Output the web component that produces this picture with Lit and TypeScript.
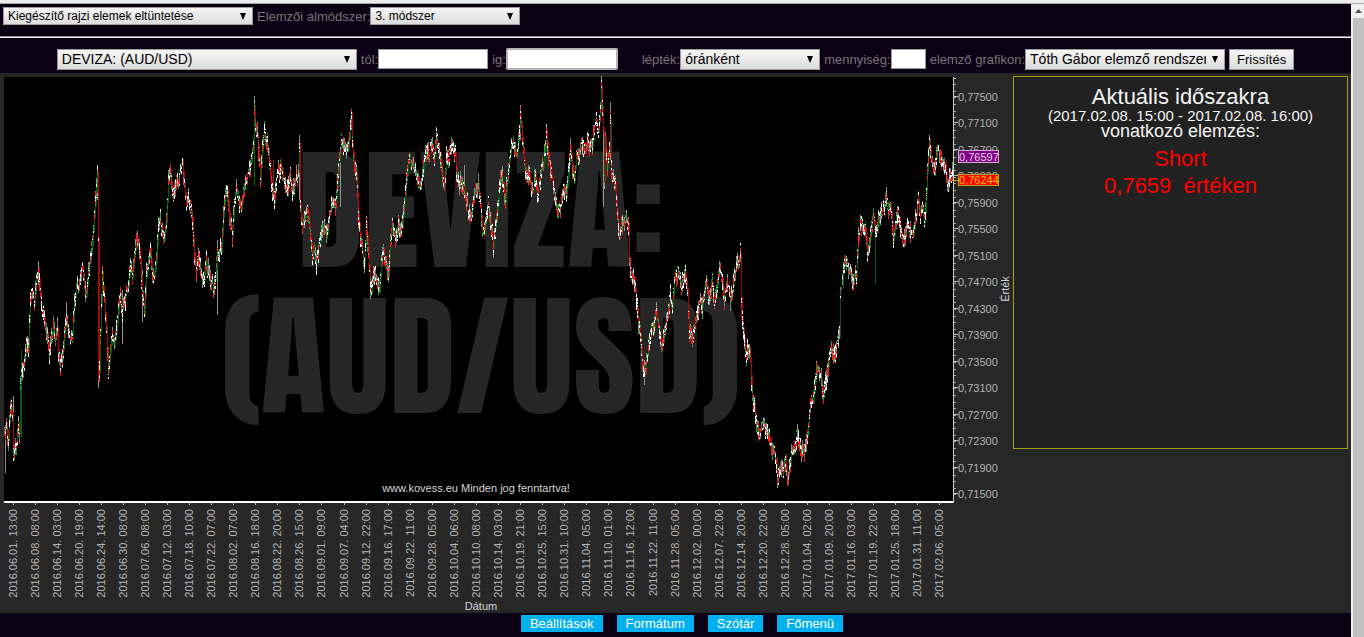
import { LitElement, html, svg, css } from "lit";
import { customElement } from "lit/decorators.js";

const DATES = `2016.06.01. 13:00|2016.06.08. 08:00|2016.06.14. 03:00|2016.06.20. 19:00|2016.06.24. 14:00|2016.06.30. 08:00|2016.07.06. 08:00|2016.07.12. 03:00|2016.07.18. 10:00|2016.07.22. 07:00|2016.08.02. 07:00|2016.08.16. 18:00|2016.08.22. 20:00|2016.08.26. 15:00|2016.09.01. 09:00|2016.09.07. 04:00|2016.09.12. 22:00|2016.09.16. 17:00|2016.09.22. 11:00|2016.09.28. 05:00|2016.10.04. 06:00|2016.10.10. 08:00|2016.10.14. 03:00|2016.10.19. 21:00|2016.10.25. 15:00|2016.10.31. 10:00|2016.11.04. 05:00|2016.11.10. 01:00|2016.11.16. 12:00|2016.11.22. 11:00|2016.11.28. 05:00|2016.12.02. 00:00|2016.12.07. 22:00|2016.12.14. 20:00|2016.12.20. 22:00|2016.12.28. 05:00|2017.01.04. 02:00|2017.01.09. 20:00|2017.01.16. 03:00|2017.01.19. 22:00|2017.01.25. 18:00|2017.01.31. 11:00|2017.02.06. 05:00`.split("|");

// Course of the rate: "x y" pairs in chart units.
const COURSE = `4 432,6 425,8 440,10 402,12 415,13 448,16 443,18 425,19 432,20 385,22 375,24 360,26 346,28 350,29 320,30 300,32 292,34 302,36 280,38 270,39 282,41 304,43 312,45 325,47 335,49 350,51 340,53 326,55 335,57 330,58 352,60 365,62 358,64 335,66 320,68 330,70 340,72 335,74 305,76 285,78 290,80 280,82 268,84 283,86 294,88 272,90 260,92 243,94 215,96 190,97 174,98 240,99 370,100 330,102 275,104 300,106 330,108 370,110 350,112 335,114 345,116 330,118 312,120 295,122 310,124 300,126 295,128 285,130 265,132 275,134 255,136 240,138 240,140 260,142 295,144 312,146 275,148 260,150 250,152 275,154 275,156 260,158 225,160 220,162 230,164 238,166 220,168 180,170 172,172 195,174 190,176 185,178 180,180 172,182 162,184 185,186 205,188 198,190 205,192 220,194 255,196 270,198 260,200 270,202 280,204 278,206 262,208 268,210 278,213 285,215 278,217 255,219 255,221 250,223 215,225 195,227 192,229 215,232 235,234 200,236 190,238 200,241 207,243 192,246 185,248 175,251 160,253 140,254 108,255 125,257 135,259 160,260 180,262 150,264 128,266 140,268 150,270 175,272 190,274 200,276 180,278 170,280 168,282 170,284 185,286 190,288 185,290 178,292 190,294 185,296 178,298 170,299 145,300 205,302 228,304 222,306 212,308 215,310 235,312 255,314 250,316 260,318 248,320 240,322 230,324 228,327 232,329 215,332 200,335 207,337 185,339 160,341 142,343 147,345 142,348 148,350 125,351 115,352 145,354 165,356 175,358 215,360 235,362 250,364 262,366 225,368 250,370 285,371 290,373 275,375 275,377 280,379 290,381 260,383 250,385 260,388 275,390 240,392 225,394 235,396 235,398 225,400 230,402 225,404 205,406 180,408 165,410 155,412 165,414 168,416 178,418 182,420 186,422 175,425 155,427 152,429 155,431 145,433 150,434 155,436 134,438 145,440 155,442 175,444 188,446 155,448 160,450 152,452 145,455 155,457 185,460 180,463 190,466 200,468 210,471 215,473 205,476 190,478 185,480 205,482 230,484 233,486 215,488 208,490 215,492 235,493 245,495 225,497 210,499 190,501 175,503 185,505 200,507 180,509 160,511 145,513 145,515 150,517 150,519 130,520 115,521 125,523 150,525 170,527 180,529 175,531 190,533 190,535 175,537 195,539 185,541 170,543 165,545 150,546 133,548 155,550 165,552 180,554 195,556 205,558 212,560 205,562 195,564 190,566 195,568 175,570 148,572 165,574 180,576 155,578 155,580 147,583 150,586 145,589 145,592 145,594 130,596 120,598 130,600 110,601 88,603 130,604 180,605 140,607 165,609 150,610 122,611 170,613 180,615 185,617 215,619 235,621 225,623 225,625 222,628 225,629 260,631 278,632 275,634 280,636 300,638 320,640 335,642 362,644 375,646 360,648 350,650 335,652 330,654 325,656 310,658 325,661 345,663 340,665 325,667 315,670 298,672 305,674 280,676 275,678 275,681 285,683 280,685 275,687 290,689 335,691 335,693 335,695 325,697 315,700 300,702 305,704 290,706 280,708 298,710 295,712 285,714 305,716 295,718 275,720 268,722 280,724 300,726 290,728 285,730 298,732 290,734 275,736 267,738 265,740 256,741 300,742 320,744 340,746 355,748 350,750 360,752 395,754 405,756 425,758 430,760 435,762 425,764 422,766 430,768 430,770 440,772 455,774 450,776 460,777 480,779 475,781 467,783 470,785 457,787 478,789 470,791 455,793 450,795 445,797 437,799 445,801 453,803 453,805 442,807 435,809 415,811 405,813 400,815 380,817 367,819 370,821 380,823 396,825 385,827 375,829 355,831 350,833 355,835 352,837 345,839 335,840 290,842 285,844 258,846 262,848 268,850 270,852 278,854 280,856 275,858 235,860 228,862 230,865 230,867 250,869 245,871 225,873 215,875 230,877 230,879 215,881 215,884 205,886 198,888 210,890 205,892 225,893 240,895 225,897 212,899 220,901 235,903 242,905 235,907 225,909 230,911 230,913 233,915 220,918 202,920 215,922 208,924 220,925 210,927 170,929 142,931 155,933 165,935 165,937 147,939 155,941 160,943 165,945 165,947 185,949 180,951 174,953 168`
  .split(",")
  .map((p) => p.split(" ").map(Number));

// Long single wicks: x, from, to.
const SPIKES = [
  [5, 425, 473], [13, 396, 430], [98, 300, 388], [122, 290, 344], [142, 270, 322], [217, 240, 315],
  [66, 302, 330], [97, 168, 200], [254, 98, 130], [299, 135, 200], [351, 110, 130], [520, 108, 140],
  [601, 79, 110], [610, 102, 160], [603, 130, 207], [370, 270, 299], [493, 235, 258], [644, 360, 385],
  [740, 248, 262], [777, 470, 488], [787, 470, 486], [38, 261, 285], [340, 160, 207], [464, 165, 190],
];

const BANDS = (() => {
  let seed = 20170208;
  const rnd = () => {
    seed = (seed * 1664525 + 1013904223) % 4294967296;
    return seed / 4294967296;
  };
  const d = { wick: "", up: "", down: "", rise: "", fall: "", lit: "" };
  const seg = (k: keyof typeof d, x: number, a: number, b: number) => {
    d[k] += `M${x}.5 ${Math.round(a)}V${Math.round(b)}`;
  };
  let i = 0;
  let prev = COURSE[0][1];
  for (let x = 4; x < 953; x++) {
    while (i < COURSE.length - 2 && COURSE[i + 1][0] <= x) i++;
    const [x0, y0] = COURSE[i];
    const [x1, y1] = COURSE[i + 1];
    const base = y0 + ((y1 - y0) * (x - x0)) / (x1 - x0);
    const y = base + (rnd() - 0.5) * 7;
    const top = y - 3 - rnd() * 8;
    const bottom = y + 3 + rnd() * 8;
    const step = base - prev;
    if (rnd() < 0.85) seg("wick", x, top, bottom);
    if (Math.abs(step) > 6) seg(step > 0 ? "fall" : "rise", x, Math.min(prev, base) - 3, Math.max(prev, base) + 3);
    else if (rnd() < 0.3) seg(rnd() < 0.5 ? "fall" : "rise", x, top, bottom);
    let at = top + rnd() * 3;
    while (at < bottom - 1) {
      const len = 1 + rnd() * 2.6;
      const r = rnd();
      if (r < 0.42) seg("lit", x, at, at + len);
      else if (r < 0.68) seg("down", x, at, at + len + 1);
      else if (r < 0.88) seg("up", x, at, at + len);
      at += len + rnd() * 2;
    }
    prev = base;
  }
  for (const [x, a, b] of SPIKES) seg("wick", x, a, b);
  seg("rise", 875, 225, 284);
  seg("rise", 21, 350, 437);
  seg("fall", 98, 230, 380);
  seg("rise", 254, 110, 186);
  seg("fall", 273, 160, 195);
  seg("fall", 741, 275, 320);
  return d;
})();

@customElement("app-root")
export class AppRoot extends LitElement {
  static styles = css`
    :host {
      display: grid;
      grid-template-columns: 1fr 13px;
      grid-template-rows: auto 1fr;
      min-height: 100vh;
      background: #0c0014;
      color: #767676;
      font: 13px/17px "Liberation Sans", Arial, sans-serif;
    }
    * { box-sizing: border-box; }
    .strip {
      grid-column: 1 / 3;
      height: 4px;
      background: #ececec;
      border-bottom: 1px solid #a8a8a8;
    }
    .page { display: flex; flex-direction: column; min-width: 0; }
    .bar { display: flex; align-items: center; }
    .first { padding: 3px 3px 0; gap: 4px; height: 32px; align-items: flex-start; }
    .second { justify-content: center; gap: 4px; padding: 10px 0 3px; min-height: 35px; }
    .rule { height: 2px; margin: 0; border: 0; border-top: 1px solid #8e8a92; background: #f4f4f4; }
    .field { display: flex; align-items: center; white-space: nowrap; }
    .scale { margin-left: 20px; }
    select, button, input {
      margin: 0;
      border: 1px solid #9a9a9a;
      border-radius: 0;
      color: #000;
      font-family: inherit;
    }
    select {
      appearance: none;
      height: 21px;
      padding: 0 18px 0 4px;
      font-size: 14px;
      background:
        url("data:image/svg+xml,%3Csvg xmlns='http://www.w3.org/2000/svg' width='6' height='7'%3E%3Cpath d='M0 0h6L3 7z'/%3E%3C/svg%3E") right 6px top 6px no-repeat,
        linear-gradient(#f6f6f6, #dcdcdc);
    }
    .small { height: 18px; font-size: 12px; background-position: right 6px top 5px, 0 0; }
    .helper { width: 250px; }
    .method { width: 150px; }
    .pair { width: 300px; }
    .unit { width: 140px; }
    .system { width: 200px; }
    input { width: 110px; height: 20px; background: #fff; }
    .until { width: 112px; height: 22px; border: 2px solid #b4b4b4; border-radius: 2px; }
    .count { width: 35px; }
    button { height: 21px; padding: 0 7px; font-size: 13px; background: linear-gradient(#f6f6f6, #dcdcdc); }
    .board { display: flex; align-items: flex-start; background: #272727; }
    .chart { flex: 1010 1 0; min-width: 0; display: block; }
    .side { flex: 341 1 0; min-width: 0; }
    .panel {
      margin: 3px;
      min-height: 373px;
      padding: 8px;
      border: 1px solid #a0a010;
      background: #212121;
      color: #f4f4f4;
      text-align: center;
    }
    .panel h1, .panel p { margin: 0; font-weight: 400; }
    .panel h1 { font-size: 22px; line-height: 24px; }
    .panel .period { font-size: 15px; line-height: 14px; white-space: nowrap; }
    .panel .about { font-size: 18px; line-height: 16px; margin-bottom: 6px; }
    .panel .signal { font-size: 22px; line-height: 27px; color: #f00; white-space: pre; }
    .foot { display: flex; justify-content: center; gap: 14px; padding: 2px 0 5px 13px; }
    .foot a { padding: 0 9px; background: #00b0f0; color: #fff; text-decoration: none; }
    .scroll { display: flex; flex-direction: column; background: #c1c1c1; border-left: 2px solid #f1eeee; }
    .scroll svg { display: block; width: 11px; height: 14px; background: #f1f1f1; }
    .label { font-size: 11px; fill: #b4b4b4; }
    .mark {
      font: 400 134px Impact, Anton, "Liberation Sans Narrow", "Open Sans Condensed", "Roboto Condensed", "DejaVu Sans Condensed", sans-serif;
      fill: #262626;
    }
    .plain { font-size: 11px; fill: #d6d6d6; }
    .last { font-size: 11px; fill: #f0c000; }
  `;

  private renderChart() {
    const minor = Array.from({ length: 64 }, (_, n) => 77.5 + n * 6.617);
    return svg`
      <svg class="chart" viewBox="0 73 1010 540" role="img" aria-label="AUD/USD">
        <rect x="4" y="77" width="949" height="424" fill="#000" />
        <g class="mark" text-anchor="middle">
          <text x="481" y="267">DEVIZA:</text>
          <text x="481" y="413">(AUD/USD)</text>
        </g>
        <g fill="none" stroke-width="1" shape-rendering="crispEdges">
          <path d=${BANDS.wick} stroke="#909090" />
          <path d=${BANDS.rise} stroke="#075c0c" />
          <path d=${BANDS.fall} stroke="#a50808" />
          <path d=${BANDS.up} stroke="#2c9a38" />
          <path d=${BANDS.down} stroke="#f02020" />
          <path d=${BANDS.lit} stroke="#fff" />
        </g>
        <text class="plain" x="476" y="492" text-anchor="middle">www.kovess.eu Minden jog fenntartva!</text>
        <rect x="4" y="501" width="950" height="2" fill="#fff" />
        <path d="M953.5 77V503" stroke="#c8c8c8" />
        ${minor.map((y) => svg`<path d="M954 ${Math.round(y) + 0.5}h2" stroke="#a8a8a8" />`)}
        ${Array.from({ length: 16 }, (_, n) => {
          const y = 97 + n * 26.47;
          return svg`
            <path d="M954 ${Math.round(y) - 0.5}h4" stroke="#c0c0c0" />
            <text class="label" x="958" y=${Math.round(y) + 4}>0,${77500 - n * 400}</text>`;
        })}
        ${DATES.map((t, n) => {
          const x = Math.round(12.5 + n * 22.07);
          return svg`
            <path d="M${x}.5 503v2" stroke="#c0c0c0" />
            <text class="label" transform="translate(${x + 4} 509) rotate(-90)" text-anchor="end">${t}</text>`;
        })}
        <text class="plain" x="481" y="610" text-anchor="middle">Dátum</text>
        <text class="plain" transform="translate(1009 289) rotate(-90)" text-anchor="middle">Érték</text>
        <path d="M952 180.5h6" stroke="#b8b800" />
        <rect x="958.5" y="150.5" width="40" height="12" fill="#85008a" stroke="#d0a8d0" />
        <text class="plain" x="959" y="161">0,76597</text>
        <rect x="958.5" y="174.5" width="40" height="11" fill="#f00" stroke="#b8a800" />
        <text class="last" x="959" y="184">0,76244</text>
      </svg>`;
  }

  render() {
    return html`
      <div class="strip"></div>
      <div class="page">
        <div class="bar first">
          <select class="small helper" aria-label="Rajzi elemek"><option>Kiegészítő rajzi elemek eltüntetése</option></select>
          <div class="field">
            <label for="method">Elemzői almódszer:</label>
            <select class="small method" id="method"><option>3. módszer</option></select>
          </div>
        </div>
        <hr class="rule" />
        <form class="bar second" @submit=${(e: Event) => e.preventDefault()}>
          <select class="pair" aria-label="Deviza"><option>DEVIZA: (AUD/USD)</option></select>
          <div class="field"><label for="from">tól:</label><input id="from" type="text" /></div>
          <div class="field"><label for="until">ig:</label><input class="until" id="until" type="text" /></div>
          <div class="field scale">
            <label for="unit">lépték:</label>
            <select class="unit" id="unit"><option>óránként</option></select>
          </div>
          <div class="field"><label for="count">mennyiség:</label><input class="count" id="count" type="text" /></div>
          <div class="field">
            <label for="system">elemző grafikon:</label>
            <select class="system" id="system"><option>Tóth Gábor elemző rendszere</option></select>
          </div>
          <button type="submit">Frissítés</button>
        </form>
        <main class="board">
          ${this.renderChart()}
          <div class="side">
            <section class="panel">
              <h1>Aktuális időszakra</h1>
              <p class="period">(2017.02.08. 15:00 - 2017.02.08. 16:00)</p>
              <p class="about">vonatkozó elemzés:</p>
              <p class="signal">Short</p>
              <p class="signal">0,7659  értéken</p>
            </section>
          </div>
        </main>
        <nav class="foot">
          <a href="#beallitasok">Beállítások</a>
          <a href="#formatum">Formátum</a>
          <a href="#szotar">Szótár</a>
          <a href="#fomenu">Főmenü</a>
        </nav>
      </div>
      <div class="scroll"><svg viewBox="0 0 11 14"><path d="M2 9h7L5.5 5z" fill="#505050" /></svg></div>
    `;
  }
}
